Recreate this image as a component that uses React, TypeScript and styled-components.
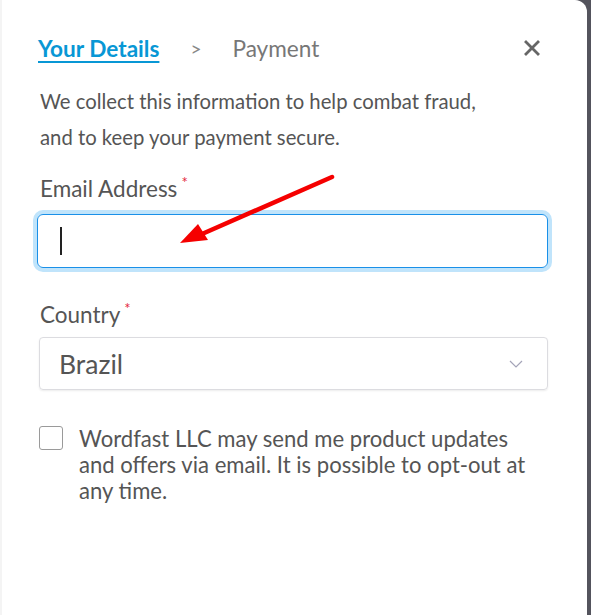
import styled, { createGlobalStyle } from "styled-components";

const Global = createGlobalStyle`
  html, body {
    margin: 0;
    padding: 0;
    background: #54545d;
  }
  body {
    font-family: Lato, "Open Sans", sans-serif;
  }
`;

const Panel = styled.div`
  position: relative;
  box-sizing: border-box;
  width: 587px;
  height: 615px;
  background: #ffffff;
  border-left: 2px solid #f4f4f4;
  border-top-right-radius: 12px;
  padding: 31px 39px 0 36px;
  overflow: hidden;
`;

const Header = styled.div`
  display: flex;
  align-items: center;
  height: 34px;
`;

const Step = styled.span<{ $active?: boolean }>`
  font-size: 22.6px;
  font-weight: ${(p) => (p.$active ? 700 : 400)};
  color: ${(p) => (p.$active ? "#0897d5" : "#777")};
  text-decoration: ${(p) => (p.$active ? "underline" : "none")};
  text-underline-offset: 4px;
  text-decoration-thickness: 2px;
`;

const Sep = styled.span`
  font-size: 19px;
  color: #888;
  margin: 0 31px 0 31px;
`;

const Close = styled.button`
  margin-left: auto;
  margin-right: 8px;
  border: none;
  background: none;
  padding: 0;
  width: 16px;
  height: 16px;
  display: flex;
  align-items: center;
  justify-content: center;
  cursor: pointer;
`;

const Intro = styled.p`
  margin: 18px 0 0 2px;
  font-size: 20.3px;
  line-height: 36px;
  color: #555;
`;

const Label = styled.label<{ $gap: number }>`
  display: block;
  margin: ${(p) => p.$gap}px 0 0 2px;
  font-size: 22.5px;
  line-height: 26px;
  color: #555;
`;

const Star = styled.sup`
  color: #e4273c;
  font-size: 15px;
  margin-left: 4px;
  vertical-align: 9px;
  line-height: 0;
`;

const EmailBox = styled.div`
  margin: 12px 0 0 -1px;
  box-sizing: border-box;
  height: 54px;
  border: 1px solid #1a90e8;
  border-radius: 6px;
  box-shadow: 0 0 0 4px #c0e4fb;
  display: flex;
  align-items: center;
  padding-left: 22px;
`;

const Caret = styled.div`
  width: 2px;
  height: 28px;
  background: #222;
`;

const Select = styled.div`
  margin: 9px 0 0 1px;
  box-sizing: border-box;
  height: 53px;
  border: 1px solid #dcdce0;
  border-radius: 4px;
  box-shadow: 0 1px 2px rgba(0, 0, 0, 0.08);
  display: flex;
  align-items: center;
  padding: 0 24px 0 19px;
  font-size: 26.5px;
  color: #555;
`;

const Chevron = styled.svg`
  margin-left: auto;
`;

const ConsentRow = styled.div`
  display: flex;
  align-items: flex-start;
  gap: 16px;
  margin: 36px 0 0 1px;
`;

const Box = styled.div`
  flex: none;
  box-sizing: border-box;
  width: 24px;
  height: 24px;
  border: 1px solid #9a9a9a;
  border-radius: 3px;
`;

const ConsentText = styled.span`
  font-size: 22.1px;
  line-height: 26px;
  color: #555;
  max-width: 460px;
`;

const Arrow = styled.svg`
  position: absolute;
  left: 0;
  top: 0;
  pointer-events: none;
`;

export default function App() {
  return (
    <>
      <Global />
      <Panel>
        <Header>
          <Step $active>Your Details</Step>
          <Sep>&gt;</Sep>
          <Step>Payment</Step>
          <Close aria-label="Close">
            <svg width="16" height="16" viewBox="0 0 16 16">
              <path d="M2 2 L14 14 M14 2 L2 14" stroke="#666" strokeWidth="2.8" strokeLinecap="square" />
            </svg>
          </Close>
        </Header>
        <Intro>
          We collect this information to help combat fraud,
          <br />
          and to keep your payment secure.
        </Intro>
        <Label $gap={21}>
          Email Address<Star>*</Star>
        </Label>
        <EmailBox>
          <Caret />
        </EmailBox>
        <Label $gap={34}>
          Country<Star>*</Star>
        </Label>
        <Select>
          Brazil
          <Chevron width="14" height="8" viewBox="0 0 14 8">
            <path d="M1 1 L7 7 L13 1" fill="none" stroke="#a4a4b8" strokeWidth="1.2" />
          </Chevron>
        </Select>
        <ConsentRow>
          <Box />
          <ConsentText>
            Wordfast LLC may send me product updates and offers via email. It is possible to opt-out at any time.
          </ConsentText>
        </ConsentRow>
        <Arrow width="587" height="615" viewBox="0 0 587 615">
          <path d="M330 177 L200 234" stroke="#f50000" strokeWidth="4.5" strokeLinecap="round" />
          <path d="M178 243 L196 224 L206 240 Z" fill="#f50000" />
        </Arrow>
      </Panel>
    </>
  );
}
